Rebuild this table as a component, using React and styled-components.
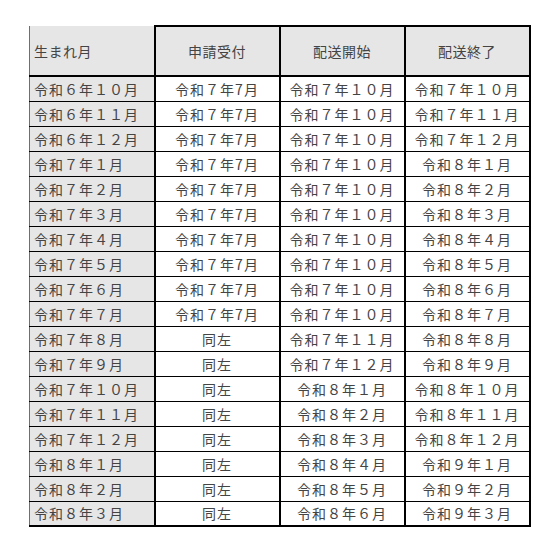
import React from 'react'
import styled, { createGlobalStyle } from 'styled-components'

const GlobalStyle = createGlobalStyle`
  html, body {
    margin: 0;
    padding: 0;
    background: #ffffff;
  }
`

const Page = styled.div`
  padding: 25px 0 0 29px;
  font-family: "Noto Sans CJK JP", "Noto Sans", sans-serif;
  color: #444444;
`

const Table = styled.table`
  border-collapse: collapse;
  table-layout: fixed;
  font-size: 14px;
`

const HeadCell = styled.th`
  width: 125px;
  height: 50px;
  padding: 0 4px;
  box-sizing: border-box;
  background: #e7e6e6;
  font-weight: 400;
  text-align: ${p => (p.first ? 'left' : 'center')};
  border-top: ${p => (p.first ? '0' : '2px solid #000')};
  border-bottom: 2px solid #000;
  border-left: ${p => (p.first ? '1px solid #6f6f6f' : '2px solid #000')};
  border-right: 2px solid #000;
  letter-spacing: 0.5px;
`

const Cell = styled.td`
  width: 125px;
  height: 25px;
  padding: 0 4px;
  box-sizing: border-box;
  background: ${p => (p.first ? '#e7e6e6' : '#ffffff')};
  text-align: ${p => (p.first ? 'left' : 'center')};
  border-top: 1px solid #000;
  border-bottom: ${p => (p.last ? '2px' : '1px')} solid #000;
  border-left: ${p => (p.first ? '1px solid #6f6f6f' : '2px solid #000')};
  border-right: 2px solid #000;
  white-space: nowrap;
  letter-spacing: 1px;
  line-height: 1;
`

const rows = [
  ['令和６年１０月', '令和７年7月', '令和７年１０月', '令和７年１０月'],
  ['令和６年１１月', '令和７年7月', '令和７年１０月', '令和７年１１月'],
  ['令和６年１２月', '令和７年7月', '令和７年１０月', '令和７年１２月'],
  ['令和７年１月', '令和７年7月', '令和７年１０月', '令和８年１月'],
  ['令和７年２月', '令和７年7月', '令和７年１０月', '令和８年２月'],
  ['令和７年３月', '令和７年7月', '令和７年１０月', '令和８年３月'],
  ['令和７年４月', '令和７年7月', '令和７年１０月', '令和８年４月'],
  ['令和７年５月', '令和７年7月', '令和７年１０月', '令和８年５月'],
  ['令和７年６月', '令和７年7月', '令和７年１０月', '令和８年６月'],
  ['令和７年７月', '令和７年7月', '令和７年１０月', '令和８年７月'],
  ['令和７年８月', '同左', '令和７年１１月', '令和８年８月'],
  ['令和７年９月', '同左', '令和７年１２月', '令和８年９月'],
  ['令和７年１０月', '同左', '令和８年１月', '令和８年１０月'],
  ['令和７年１１月', '同左', '令和８年２月', '令和８年１１月'],
  ['令和７年１２月', '同左', '令和８年３月', '令和８年１２月'],
  ['令和８年１月', '同左', '令和８年４月', '令和９年１月'],
  ['令和８年２月', '同左', '令和８年５月', '令和９年２月'],
  ['令和８年３月', '同左', '令和８年６月', '令和９年３月'],
]

const headers = ['生まれ月', '申請受付', '配送開始', '配送終了']

const App = () => {
  return (
    <Page>
      <GlobalStyle />
      <Table>
        <thead>
          <tr>
            {headers.map((h, i) => (
              <HeadCell key={h} first={i === 0}>{h}</HeadCell>
            ))}
          </tr>
        </thead>
        <tbody>
          {rows.map((row, r) => (
            <tr key={r}>
              {row.map((text, i) => (
                <Cell key={i} first={i === 0} last={r === rows.length - 1}>
                  {text}
                </Cell>
              ))}
            </tr>
          ))}
        </tbody>
      </Table>
    </Page>
  )
}

export default App
